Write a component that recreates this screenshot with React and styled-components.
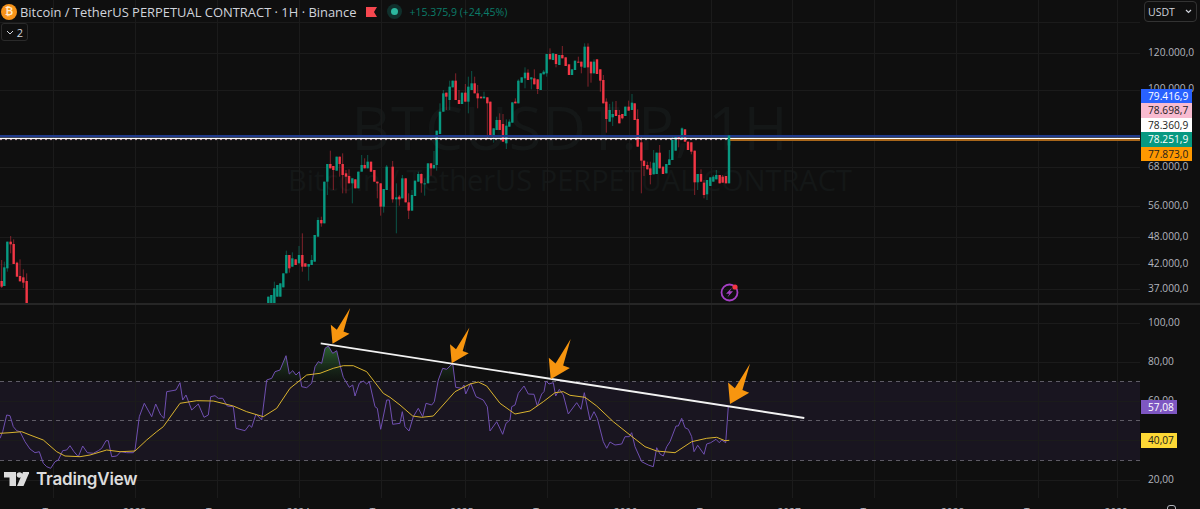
import React from "react";
import styled, { createGlobalStyle } from "styled-components";

const GlobalStyle = createGlobalStyle`
  html, body {
    margin: 0;
    padding: 0;
    background: #0f0f0f;
  }
`;

const Chart = styled.div`
  width: 1200px;
  height: 509px;
  background: #0f0f0f;
  position: relative;
  overflow: hidden;
  font-family: "Open Sans", "Liberation Sans", sans-serif;
  display: flex;
  flex-direction: column;
`;

const PaneRow = styled.div`
  height: ${(p) => p.$height}px;
  display: flex;
  position: relative;
`;

const Separator = styled.div`
  height: 2px;
  background: #262626;
`;

const Plot = styled.div`
  width: 1140px;
  position: relative;
`;

const PlotSvg = styled.svg`
  display: block;
  position: relative;
  z-index: 1;
`;

const Watermark = styled.div`
  position: absolute;
  left: 0;
  right: 0;
  top: 91px;
  text-align: center;
  color: #141717;
  line-height: 1;
`;

const WatermarkTitle = styled.div`
  font-size: 60px;
  line-height: 72px;
  letter-spacing: 1px;
`;

const WatermarkSub = styled.div`
  font-size: 29px;
  line-height: 34px;
`;

const Scale = styled.div`
  width: 60px;
  position: relative;
`;

const Tick = styled.div`
  height: 14px;
  line-height: 14px;
  margin-top: ${(p) => p.$gap}px;
  padding-left: 8px;
  font-size: 10.2px;
  color: #b2b5be;
  white-space: nowrap;
`;

const TagStack = styled.div`
  position: absolute;
  left: 1px;
  top: ${(p) => p.$top}px;
  display: flex;
  flex-direction: column;
  gap: ${(p) => p.$gap || 0}px;
  z-index: 2;
`;

const Tag = styled.div`
  width: ${(p) => p.$width}px;
  height: ${(p) => p.$height || 14.4}px;
  line-height: ${(p) => p.$height || 14.4}px;
  box-sizing: border-box;
  padding-left: 7px;
  font-size: 10.2px;
  background: ${(p) => p.$bg};
  color: ${(p) => p.$fg};
`;

const UnitButton = styled.div`
  position: absolute;
  left: 4px;
  top: 1px;
  width: 53px;
  height: 21px;
  box-sizing: border-box;
  border: 1px solid #333;
  border-radius: 4px;
  padding: 0 4px 0 3px;
  display: flex;
  align-items: center;
  justify-content: space-between;
  font-size: 10.5px;
  color: #d1d4dc;
`;

const Legend = styled.div`
  position: absolute;
  left: 1px;
  top: 3px;
  z-index: 3;
  display: flex;
  align-items: center;
  height: 17px;
`;

const CoinIcon = styled.div`
  width: 16px;
  height: 16px;
  border-radius: 50%;
  background: #f7931a;
  color: #ffe9cc;
  font-family: "DejaVu Sans", sans-serif;
  font-size: 10px;
  font-weight: 700;
  line-height: 16px;
  text-align: center;
`;

const Symbol = styled.div`
  margin-left: 3px;
  font-size: 12.93px;
  color: #d1d4dc;
  white-space: nowrap;
`;

const Flag = styled.svg`
  margin-left: 10px;
`;

const StatusDot = styled.div`
  margin-left: 10px;
  width: 15px;
  height: 15px;
  border-radius: 50%;
  background: #10302c;
  display: flex;
  align-items: center;
  justify-content: center;
  &::after {
    content: "";
    width: 7px;
    height: 7px;
    border-radius: 50%;
    background: #2cb89f;
  }
`;

const Change = styled.div`
  margin-left: 7px;
  font-size: 10.5px;
  color: #0b7c69;
  white-space: nowrap;
`;

const CollapseButton = styled.div`
  position: absolute;
  left: 1px;
  top: 23px;
  z-index: 3;
  width: 27px;
  height: 18px;
  box-sizing: border-box;
  border: 1px solid #2a2a2a;
  border-radius: 3px;
  display: flex;
  align-items: center;
  justify-content: center;
  gap: 3px;
  font-size: 11px;
  color: #d1d4dc;
`;

const Brand = styled.div`
  position: absolute;
  left: 4px;
  top: 164px;
  z-index: 3;
  display: flex;
  align-items: center;
  gap: 7px;
`;

const BrandName = styled.div`
  font-family: Inter, "Liberation Sans", sans-serif;
  font-size: 17px;
  font-weight: 600;
  letter-spacing: -0.2px;
  color: #dcdcdc;
`;

const TimeAxis = styled.div`
  height: 11px;
  overflow: hidden;
  display: grid;
  grid-template-columns: repeat(14, 81.8px);
  padding-left: 12px;
  position: relative;
`;

const TimeLabel = styled.div`
  padding-top: 7px;
  text-align: center;
  font-size: 10.2px;
  line-height: 14px;
  color: #b2b5be;
`;

const SettingsGlyph = styled.div`
  position: absolute;
  left: 1167px;
  top: 7px;
  width: 9px;
  height: 9px;
  box-sizing: border-box;
  border: 1px solid #b2b5be;
  border-radius: 3px;
`;

const VERTICALS = [53, 135, 217, 299, 381, 465, 547, 629, 711, 792, 874, 956, 1038, 1117];
const GRID_TOP = [22, 53, 90, 167, 206, 237, 264, 289];
const GRID_RSI = [18, 57, 96, 135, 175];

// traced by hand off the chart: colour, x, body top, body bottom, wick top, wick bottom
const CANDLES_A = [
  ["r",5,183,200,120,204],["g",13,142,198,125],["g",22,65,145,65,155],["r",32,65,73,48,100],["r",41,72,132,58],
  ["r",51,128,170,125],["r",60,168,184,118],["r",70,172,188,148,204],["r",80,183,300,160],
];

const CANDLES_B = [
  ["g",25,770,800],["g",34,765,800],["g",43,745,800,725],["g",52,735,770],["g",61,730,770],["g",70,700,742],
  ["g",79,645,700,632],["r",88,645,685,645,698],["g",97,655,680,637],["r",107,658,675],["g",117,645,670,618],
  ["r",127,645,680,580,695],["r",136,670,680],["g",146,672,680,672,722],["g",155,660,675,645],["g",164,585,665],
  ["g",174,540,590,532],["r",184,540,550,530,560],["g",193,425,550],["g",202,372,425,372,465],["r",211,372,385,332],
  ["r",220,378,390,378,450],["g",230,350,392],["r",239,350,372,350,410],["r",248,372,405,340,460],["r",258,400,410,390,460],
  ["r",267,408,430,388],["g",277,415,430,415,490],["r",286,418,445],["g",295,395,445],["g",305,375,395,345],
  ["r",314,375,385,355],["g",323,365,385,345],["r",333,365,395],["r",343,390,425],["r",352,425,430,425,475],
  ["r",362,430,500,430,527],["g",371,447,500,447,518],["g",380,380,450,375],["r",398,380,478,363,488],
  ["g",409,472,478,430,580],["r",418,470,478,465,497],["g",427,415,475,405],["r",437,415,487],["r",446,487,512,460,537],
  ["g",456,465,512,450],["g",465,422,468],["g",475,402,425,395],["r",484,402,430,400,458],["g",494,430,432,415,467],
  ["g",504,370,430],["r",513,370,385,370,407],["g",522,375,385,333],["g",530,272,375,272,392],["g",540,215,282,190],
  ["g",550,160,215,150],["r",559,158,170,158,210],["g",569,140,180,122,210],["g",578,122,142],["r",587,122,180,100],
  ["r",597,180,192,150],["g",606,158,192],["r",616,158,185,132],["g",625,140,185,110,220],["g",635,130,150,93],
  ["r",644,130,160,110],["r",653,160,175,135,205],["r",663,170,175],["g",672,170,175,155],["r",682,172,190,172,298],
  ["r",691,185,285],["g",701,265,285,265,308],["g",710,240,270,230],["r",719,240,270,220],["r",729,252,305,222],
  ["g",739,257,310,238,327],["g",748,245,260,238],
];

const CANDLES_C = [
  ["g",37,187,248],["r",46,185,190,175],["g",55,122,190,118],["g",65,112,128],["g",75,98,115,82,145],["r",84,98,120,88],
  ["g",94,112,118,112,148],["r",103,115,133,88],["r",113,118,147,118,162],["g",122,100,150],["g",131,95,103,90],
  ["g",140,42,100,42,110],["r",150,42,58,25],["g",159,40,60],["r",168,42,72,42,82],["g",178,45,75],["r",187,45,55,18],
  ["r",197,52,78],["r",207,73,105],["g",216,88,105],["g",225,62,90],["r",235,65,68,50],["r",244,65,80,65,100],
  ["g",254,20,83,10],["r",264,20,82,10,140],["r",273,65,100,65,128],["g",282,65,100,58],["r",291,58,102],
  ["r",301,88,122,88,155],["r",310,120,190,105],["r",319,185,237,175,278],["g",329,210,245,192],["g",338,222,232,185,258],
  ["r",348,210,228,183],["r",358,225,250,210],["r",367,222,235,222,238],["g",376,200,228],["r",386,200,212,182],
  ["g",396,188,210,162],["r",404,190,240],["r",413,237,320,208],["r",424,307,362,288,460],["r",432,362,378,362,408],
  ["r",442,375,388,365],["r",451,385,405,365,433],["g",461,368,403,330],["g",470,338,402],["r",479,338,385,315],
  ["r",489,380,402],["g",499,372,400],["g",508,358,375,330],["g",517,300,360,288],["g",527,290,332,288],
  ["r",536,288,298,288,322],["g",546,265,300,262],["r",555,268,305],["r",564,305,330],["r",574,307,335,307,343],
  ["r",584,332,427,332,465],["g",593,402,427,402,450],["r",603,402,425,388],["r",612,428,465,420,475],
  ["g",621,420,463,420,480],["g",631,412,438],["g",640,410,425,405],["g",649,405,418,390],["r",659,405,430],
  ["r",668,410,428,405],["r",678,408,430],["g",687,292,430],
];

const toCandles = (rows, left, top) =>
  rows.map(([c, x, t, b, wt, wb]) => ({
    color: c === "g" ? "#089981" : "#f23645",
    x: left + x / 3,
    top: top + t / 3,
    bottom: top + b / 3,
    wickTop: top + (wt ?? t) / 3,
    wickBottom: top + (wb ?? b) / 3,
  }));

const candles = [
  ...toCandles(CANDLES_A, 0, 220),
  ...toCandles(CANDLES_B, 260, 40),
  ...toCandles(CANDLES_C, 500, 40),
];

const RSI_A = "0,415 8,395 20,345 30,347 40,380 50,392 60,395 75,425 90,447 105,458 118,455 130,490 140,500 152,505 165,485 175,480 188,452 200,450 210,437 222,455 235,470 248,438 262,458 280,460 295,452 305,445 318,422 325,422 335,470 350,468 362,455 380,458 400,458 405,450 418,350 433,310 455,350 467,312 482,345 492,355 500,275 528,270 540,248 548,300 558,285 575,330 595,312 612,352 625,345 632,290 645,287 655,295 668,295 682,318 700,320 708,385 735,392 748,375 755,382 768,342 785,360 800,240 815,235 825,215 840,210 858,167 868,222 878,212 888,225 898,215 905,260 920,263 935,250 945,200 955,185 965,190 975,145 985,138 998,160 1010,152 1020,195 1030,232 1048,262 1058,255 1065,288 1078,250 1090,243 1100,252 1108,245 1125,320 1132,325 1142,388 1160,300 1168,300 1178,373 1200,370";
const RSI_B = "7,335 15,380 27,393 40,350 55,325 68,350 78,310 95,315 103,305 115,240 128,205 140,208 158,190 167,262 185,265 192,255 197,282 212,250 228,290 250,300 262,320 270,393 290,365 308,403 318,370 330,360 335,320 345,315 355,280 372,258 385,282 402,283 412,318 425,282 432,275 438,243 447,252 460,248 467,288 478,268 490,285 505,342 530,308 543,328 553,278 570,360 582,335 592,355 610,425 620,445 630,426 645,435 665,432 675,410 688,410 695,398 705,440 725,485 745,495 760,500 770,443 780,462 790,468 800,440 810,425 828,378 835,378 845,355 855,383 865,388 875,410 882,455 893,436 912,463 920,432 932,428 948,418 958,428 965,420 977,428 985,320";
const MA_A = "0,400 30,398 65,395 90,405 130,420 170,455 195,468 240,470 270,465 320,450 360,455 405,453 440,420 470,395 490,380 540,310 590,302 640,303 700,318 740,335 790,350 830,325 870,265 920,225 960,220 1000,205 1030,197 1060,197 1100,215 1150,280 1170,292 1200,315";
const MA_B = "38,348 65,352 100,348 165,275 210,252 235,246 260,258 300,310 345,342 390,333 430,305 465,278 490,275 510,286 555,292 590,318 640,365 690,405 735,440 770,453 825,458 875,425 920,415 950,412 975,422 988,421";

// zoomed coordinates into this pane's own pixels (pane starts at y=305)
const toPoints = (str, left) =>
  str.split(" ").map((pair) => {
    const [x, y] = pair.split(",").map(Number);
    return [left + x / 3, 300 + y / 3 - 305];
  });

const line = (pts) => pts.map(([x, y]) => `${x.toFixed(1)},${y.toFixed(1)}`).join(" ");

const rsiPoints = [...toPoints(RSI_A, 0), ...toPoints(RSI_B, 400)];
const maPoints = [...toPoints(MA_A, 0), ...toPoints(MA_B, 400)];

const ARROW = [[17.7, -35.7], [11, -12.3], [17, -10], [0, 0], [-1.7, -19], [4.3, -14]];
const ARROWS = [
  { x: 332.5, y: 38.7, s: 1 },
  { x: 451.7, y: 58.3, s: 1 },
  { x: 550.7, y: 74.3, s: 1.13 },
  { x: 730, y: 99, s: 1.13 },
];

const PRICE_TICKS = [
  { label: "120.000,0", gap: 45 },
  { label: "100.000,0", gap: 22 },
  { label: "68.000,0", gap: 64 },
  { label: "56.000,0", gap: 25 },
  { label: "48.000,0", gap: 17 },
  { label: "42.000,0", gap: 13 },
  { label: "37.000,0", gap: 11 },
];

const PRICE_TAGS = [
  { label: "79.416,9", bg: "#2962ff", fg: "#fff" },
  { label: "78.698,7", bg: "#f8bbd0", fg: "#1c1c1c" },
  { label: "78.360,9", bg: "#fff", fg: "#1c1c1c" },
  { label: "78.251,9", bg: "#089981", fg: "#fff" },
  { label: "77.873,0", bg: "#ff9800", fg: "#1c1c1c" },
];

const RSI_TICKS = [
  { label: "100,00", gap: 10 },
  { label: "80,00", gap: 25 },
  { label: "60,00", gap: 25 },
  { label: "20,00", gap: 65 },
];

const TIME_LABELS = ["Tem", "2023", "Tem", "2024", "Tem", "2025", "Tem", "2026", "Tem", "2027", "Tem", "2028", "Tem", "2029"];

const Grid = ({ rows, height }) => (
  <g stroke="#1b1b1b" strokeWidth="1">
    {VERTICALS.filter((x) => x < 1140).map((x) => (
      <line key={x} x1={x + 0.5} x2={x + 0.5} y1="0" y2={height} />
    ))}
    {rows.map((y) => (
      <line key={y} x1="0" x2="1140" y1={y + 0.5} y2={y + 0.5} />
    ))}
  </g>
);

const PricePlot = () => (
  <PlotSvg width="1140" height="303">
    <Grid rows={GRID_TOP} height={303} />
    {candles.map((c) => (
      <g key={c.x} fill={c.color}>
        <rect x={c.x - 0.5} y={c.wickTop} width="1" height={c.wickBottom - c.wickTop} opacity="0.5" />
        <rect x={c.x - 1.2} y={c.top} width="2.4" height={Math.max(c.bottom - c.top, 1)} />
      </g>
    ))}
    <rect x="0" y="135" width="1140" height="2.3" fill="#1f3a8c" />
    <rect x="0" y="137.8" width="1140" height="1.3" fill="#fff" />
    <line x1="0" x2="729" y1="139.6" y2="139.6" stroke="#c9a3b3" strokeWidth="1" strokeDasharray="2 3" />
    <rect x="730" y="139" width="410" height="2" fill="#a8661a" />
    <rect x="727.8" y="135.5" width="2.4" height="10" fill="#089981" />
    <circle cx="729.5" cy="292.5" r="8" fill="none" stroke="#a53fc4" strokeWidth="1.8" />
    <path d="M732 287.5 L726 293.8 H729.3 L727.3 297.5 L733 291.2 H729.8 Z" fill="#a53fc4" />
    <circle cx="735" cy="287" r="2.6" fill="#f23645" />
  </PlotSvg>
);

const RsiPlot = () => {
  const rsiPath = line(rsiPoints);
  return (
    <PlotSvg width="1140" height="193">
      <defs>
        <linearGradient id="overbought" x1="0" x2="0" y1="40" y2="76" gradientUnits="userSpaceOnUse">
          <stop offset="0" stopColor="#2f6b35" stopOpacity="0.95" />
          <stop offset="1" stopColor="#1c3a20" stopOpacity="0.1" />
        </linearGradient>
        <clipPath id="aboveBand">
          <rect x="0" y="0" width="1140" height="76.5" />
        </clipPath>
      </defs>
      <rect x="0" y="76.5" width="1140" height="79" fill="#191520" />
      <Grid rows={GRID_RSI} height={193} />
      <g stroke="#5f5c66" strokeWidth="1" strokeDasharray="4 4">
        <line x1="0" x2="1140" y1="76.5" y2="76.5" />
        <line x1="0" x2="1140" y1="115.5" y2="115.5" />
        <line x1="0" x2="1140" y1="155.5" y2="155.5" />
      </g>
      <polygon points={`${rsiPath} 729,200 0,200`} fill="url(#overbought)" clipPath="url(#aboveBand)" />
      <polyline points={rsiPath} fill="none" stroke="#6f4fb0" strokeWidth="1" />
      <polyline points={line(maPoints)} fill="none" stroke="#d9b32e" strokeWidth="1" />
      <line x1="320.7" y1="38.3" x2="804.3" y2="113" stroke="#f2f2f2" strokeWidth="1.8" />
      {ARROWS.map((a) => (
        <polygon
          key={a.x}
          points={ARROW.map(([dx, dy]) => `${a.x + dx * a.s},${a.y + dy * a.s}`).join(" ")}
          fill="#f7950f"
        />
      ))}
    </PlotSvg>
  );
};

const App = () => {
  return (
    <Chart>
      <GlobalStyle />
      <PaneRow $height={303}>
        <Plot>
          <Watermark>
            <WatermarkTitle>BTCUSDT.P, 1H</WatermarkTitle>
            <WatermarkSub>Bitcoin / TetherUS PERPETUAL CONTRACT</WatermarkSub>
          </Watermark>
          <PricePlot />
          <Legend>
            <CoinIcon>₿</CoinIcon>
            <Symbol>Bitcoin / TetherUS PERPETUAL CONTRACT · 1H · Binance</Symbol>
            <Flag width="11" height="10" viewBox="0 0 11 10">
              <path d="M0 0H11L8 5L11 10H0Z" fill="#f6474f" />
            </Flag>
            <StatusDot />
            <Change>+15.375,9 (+24,45%)</Change>
          </Legend>
          <CollapseButton>
            <svg width="8" height="5" viewBox="0 0 8 5">
              <path d="M1 1L4 4L7 1" fill="none" stroke="#d1d4dc" strokeWidth="1" />
            </svg>
            2
          </CollapseButton>
        </Plot>
        <Scale>
          {PRICE_TICKS.map((t) => (
            <Tick key={t.label} $gap={t.gap}>
              {t.label}
            </Tick>
          ))}
          <UnitButton>
            USDT
            <svg width="7" height="5" viewBox="0 0 7 5">
              <path d="M1 1L3.5 3.5L6 1" fill="none" stroke="#d1d4dc" strokeWidth="1.2" />
            </svg>
          </UnitButton>
          <TagStack $top={89}>
            {PRICE_TAGS.map((t) => (
              <Tag key={t.label} $width={51} $bg={t.bg} $fg={t.fg}>
                {t.label}
              </Tag>
            ))}
          </TagStack>
        </Scale>
      </PaneRow>
      <Separator />
      <PaneRow $height={193}>
        <Plot>
          <RsiPlot />
          <Brand>
            <svg width="25" height="14" viewBox="0 0 25 14">
              <path d="M0 0H12V14H5.5V5.5H0Z" fill="#dcdcdc" />
              <circle cx="15.5" cy="3" r="2.8" fill="#dcdcdc" />
              <path d="M19 0H25.5L19.5 14H13Z" fill="#dcdcdc" />
            </svg>
            <BrandName>TradingView</BrandName>
          </Brand>
        </Plot>
        <Scale>
          {RSI_TICKS.map((t) => (
            <Tick key={t.label} $gap={t.gap}>
              {t.label}
            </Tick>
          ))}
          <TagStack $top={95} $gap={19}>
            <Tag $width={36} $bg="#7e57c2" $fg="#fff">
              57,08
            </Tag>
            <Tag $width={36} $bg="#fdd835" $fg="#1c1c1c">
              40,07
            </Tag>
          </TagStack>
        </Scale>
      </PaneRow>
      <TimeAxis>
        {TIME_LABELS.map((t, i) => (
          <TimeLabel key={`${t}-${i}`}>{t}</TimeLabel>
        ))}
        <SettingsGlyph />
      </TimeAxis>
    </Chart>
  );
};

export default App;
